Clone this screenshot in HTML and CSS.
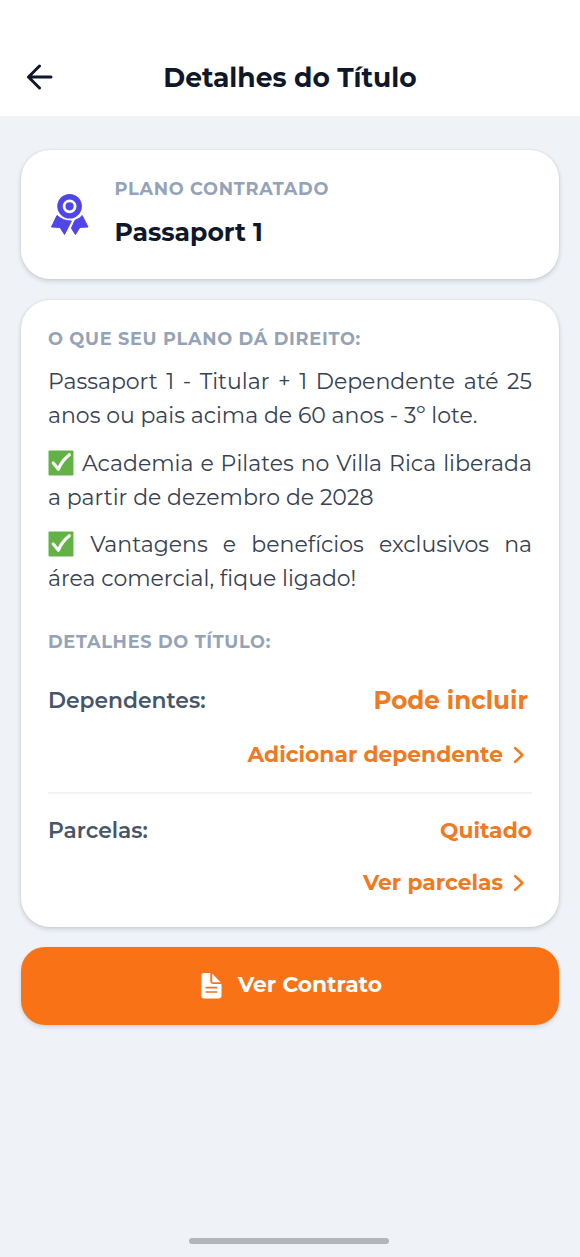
FILE: index.html
```
<!DOCTYPE html>
<html lang="pt-BR">
<head>
<meta charset="utf-8">
<title>Detalhes do Título</title>
<link rel="stylesheet" href="styles.css">
</head>
<body>
<header class="topbar">
  <svg class="back" viewBox="0 0 28 26" width="28" height="26"><path d="M13.500 2 L2.500 13 L13.500 24 M2.500 13 H25"/></svg>
  <h1 class="title">Detalhes do Título</h1>
</header>
<main class="content">
  <section class="card plan">
    <svg class="medal" viewBox="0 0 38 42" width="38" height="42">
      <circle cx="18.600" cy="12.300" r="12.300" fill="#4f46e5"/>
      <circle cx="18.600" cy="12.300" r="5.500" fill="#4f46e5" stroke="#fff" stroke-width="2.800"/>
      <path fill="#4f46e5" stroke="#4f46e5" stroke-width="1" stroke-linejoin="round" d="M6 21.500 L0.500 33 L9 33.400 L13.500 40.500 L20.400 27 Q12 27 6 21.500 Z M31.200 21.500 Q28.700 25 24 26.300 L20.400 34.300 L24.400 40.500 L28.900 33.400 L37 33 Z"/>
    </svg>
    <div class="plan-info">
      <p class="label">PLANO CONTRATADO</p>
      <p class="plan-name">Passaport 1</p>
    </div>
  </section>
  <section class="card details">
    <h2 class="label">O QUE SEU PLANO DÁ DIREITO:</h2>
    <div class="rights">
      <p>Passaport 1 - Titular + 1 Dependente até 25 anos ou pais acima de 60 anos - 3º lote.</p>
      <p><svg class="check" viewBox="0 0 25 25"><rect x=".5" y=".5" width="24" height="24" rx="1"/><path d="M5 12.500 L10 18.500 Q13 10.500 20.500 4.500"/></svg> Academia e Pilates no Villa Rica liberada a partir de dezembro de 2028</p>
      <p><svg class="check" viewBox="0 0 25 25"><rect x=".5" y=".5" width="24" height="24" rx="1"/><path d="M5 12.500 L10 18.500 Q13 10.500 20.500 4.500"/></svg> Vantagens e benefícios exclusivos na área comercial, fique ligado!</p>
    </div>
    <h2 class="label second">DETALHES DO TÍTULO:</h2>
    <div class="row first">
      <span class="key">Dependentes:</span><span class="big">Pode incluir</span>
    </div>
    <a class="link"><span>Adicionar dependente</span><svg class="chev" viewBox="0 0 12 18" width="12" height="18"><path d="M2 2 L9.500 9 L2 16"/></svg></a>
    <hr class="rule">
    <div class="row">
      <span class="key">Parcelas:</span><span class="value">Quitado</span>
    </div>
    <a class="link last"><span>Ver parcelas</span><svg class="chev" viewBox="0 0 12 18" width="12" height="18"><path d="M2 2 L9.500 9 L2 16"/></svg></a>
  </section>
  <button class="cta">
    <svg viewBox="0 0 21 26" width="21" height="26"><path fill="#fff" d="M3 0 H9.300 V8 Q9.300 11 12.300 11 H20.500 V22.500 Q20.500 25.500 17.500 25.500 H3 Q0.300 25.500 0.300 22.500 V3 Q0.300 0 3 0 Z M11.200 0.800 L19.600 9.200 H11.200 Z"/><path d="M5.300 14.700 H15.500 M5.300 19 H15.500" stroke="#f97316" stroke-width="1.700" stroke-linecap="round"/></svg>
    <span>Ver Contrato</span>
  </button>
</main>
<div class="home"></div>
</body>
</html>
```
FILE: styles.css
```
* { box-sizing: border-box; margin: 0; padding: 0; }
body {
  min-height: 1257px;
  display: flex;
  flex-direction: column;
  background: #eff3f8;
  font-family: Montserrat, Inter, "Liberation Sans", sans-serif;
  color: #0f172a;
}
.topbar {
  height: 116px;
  padding: 38px 26px 0;
  display: grid;
  grid-template-columns: 28px 1fr 28px;
  align-items: center;
  background: #fff;
}
.back { fill: none; stroke: #0f172a; stroke-width: 3; stroke-linecap: round; stroke-linejoin: round; }
.title { padding-top: 2px; font-size: 26.500px; line-height: 32px; font-weight: 700; text-align: center; white-space: nowrap; }
.content { padding: 34px 21px 0; display: flex; flex-direction: column; flex: 1; }
.card {
  background: #fff;
  border-radius: 29px;
  box-shadow: 0 2px 5px rgba(15, 23, 42, .17), 0 0 2px rgba(15, 23, 42, .1);
}
.plan { height: 129px; padding: 26px 30px; display: flex; gap: 25.500px; }
.medal { margin-top: 18px; flex: none; }
.label { font-size: 17.700px; line-height: 26px; font-weight: 700; letter-spacing: .720px; color: #94a3b8; white-space: nowrap; }
.plan-name { margin-top: 14px; font-size: 25.100px; line-height: 32px; font-weight: 700; white-space: nowrap; }
.details { margin-top: 21px; height: 627px; padding: 26px 27px 0; }
.rights { margin-top: 13px; font-size: 22px; line-height: 34px; font-weight: 400; color: #374151; text-align: justify; }
.rights p + p { margin-top: 13.500px; }
.check { width: 26px; height: 26px; margin-right: 1px; vertical-align: -5px; fill: #62b246; }
.check path { fill: none; stroke: #fff; stroke-width: 3; stroke-linecap: round; stroke-linejoin: round; }
.second { margin-top: 33px; }
.row { display: flex; justify-content: space-between; align-items: center; height: 32px; white-space: nowrap; }
.first { margin-top: 29px; padding-right: 4px; }
.key { font-size: 21.800px; font-weight: 600; color: #475569; }
.big { font-size: 24.600px; font-weight: 700; color: #f07a22; }
.value { font-size: 21.800px; font-weight: 700; color: #f07a22; }
.link { margin-top: 22px; display: flex; justify-content: flex-end; align-items: center; gap: 10px; height: 32px; padding-right: 7px; font-size: 21.800px; font-weight: 700; color: #f07a22; white-space: nowrap; }
.chev { margin-top: 2px; fill: none; stroke: #f07a22; stroke-width: 2.400; stroke-linecap: round; stroke-linejoin: round; }
.rule { margin: 22px 0 20px; border: 0; height: 2px; background: #f1f3f5; }
.last { margin-top: 20px; }
.cta {
  margin-top: 20px; padding: 0 0 0 3px; height: 78px; border: 0; border-radius: 24px;
  display: flex; justify-content: center; align-items: center; gap: 16px;
  background: #f97316; color: #fff;
  font-family: inherit; font-size: 21.800px; font-weight: 700; white-space: nowrap;
  box-shadow: 0 2px 4px rgba(15, 23, 42, .14);
}
.cta span { padding-bottom: 4px; }
.home { width: 200px; height: 6px; margin: 0 191px 13px 189px; border-radius: 3px; background: #b2b5ba; }
```
